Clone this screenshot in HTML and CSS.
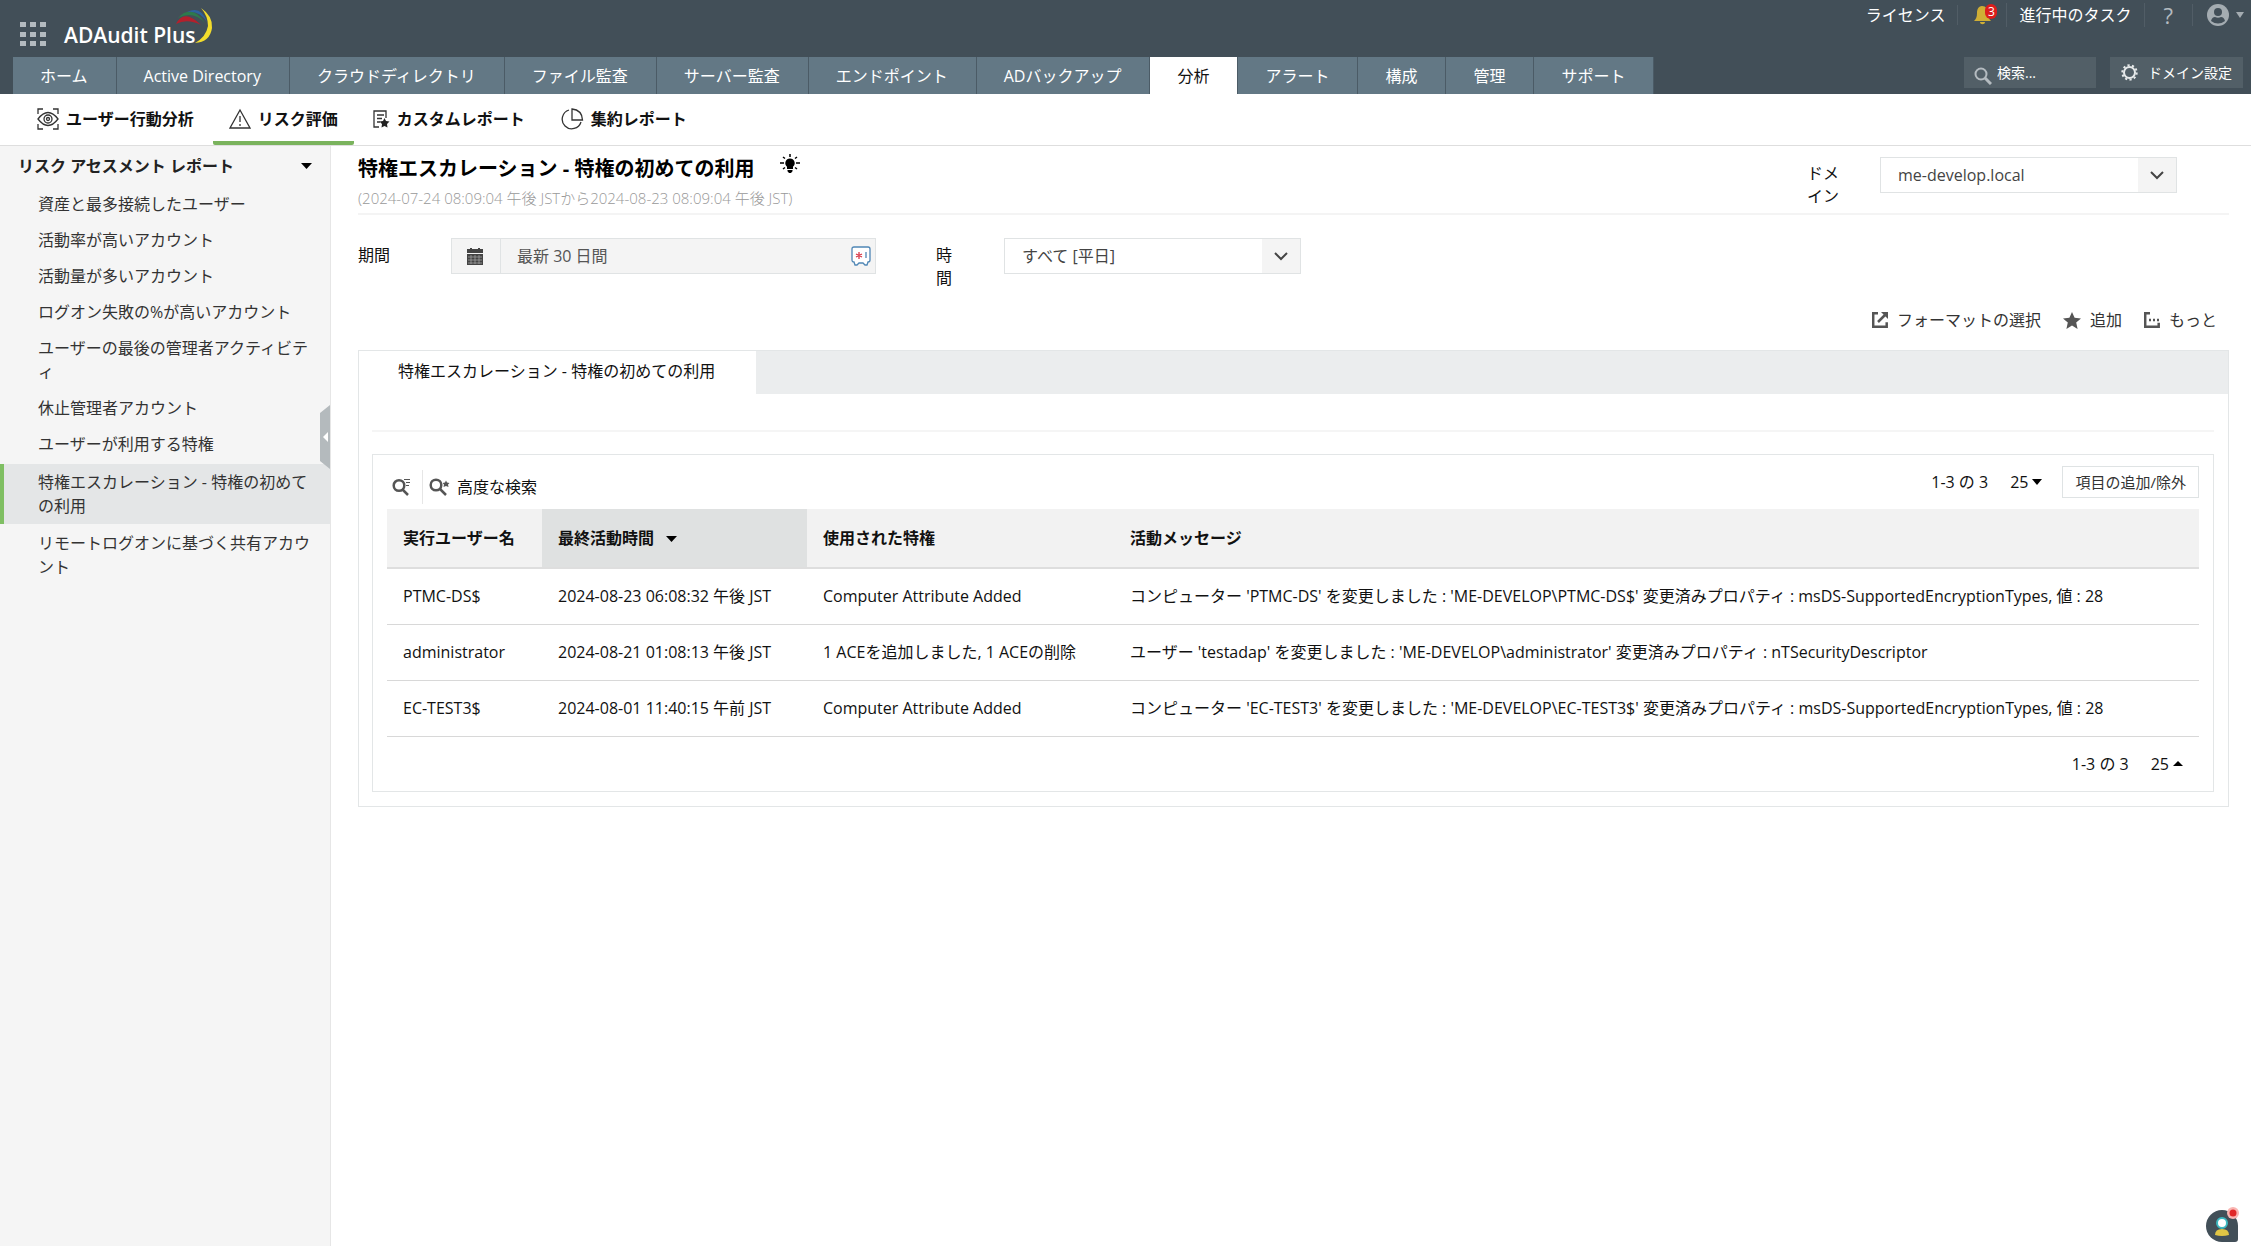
FILE: index.html
```html
<!DOCTYPE html>
<html lang="ja">
<head>
<meta charset="utf-8">
<title>ADAudit Plus</title>
<link rel="stylesheet" href="styles.css">
</head>
<body>
<header class="header">
  <div class="header-top">
    <div class="brand">
      <button class="icon-button" aria-label="アプリ">
        <svg width="26" height="25" viewBox="0 0 26 25" fill="#b4bbc0"><path d="M0 0h6v5H0zM10 0h6v5h-6zM20 0h6v5h-6zM0 10h6v5H0zM10 10h6v5h-6zM20 10h6v5h-6zM0 19h6v5H0zM10 19h6v5h-6zM20 19h6v5h-6z"/></svg>
      </button>
      <a class="logo" href="#">ADAudit Plus
        <svg class="logo-swoosh" width="37" height="36" viewBox="0 0 37 36"><path d="M0 16Q8 0 25 17Q11 10 0 16Z" fill="#b3202c"/><path d="M2 10Q16-5 29 15Q17 2 2 10Z" fill="#2d7a4c"/><path d="M11 4Q25-3 31 14Q23 2 11 4Z" fill="#2d62a0"/><path d="M25 0Q37 8 36 20Q34 34 19 35Q30 29 32 18Q32 8 25 0Z" fill="#f2dc2c"/></svg>
      </a>
    </div>
    <div class="user-bar">
      <a href="#">ライセンス</a>
      <button class="icon-button bell" aria-label="通知">
        <svg width="20" height="20" viewBox="0 0 20 20" fill="#cfae35"><path d="M9 1c-4 0-5 4-5 7 0 4-1 6-3 8h17c-2-2-3-4-3-8 0-4-2-7-6-7zM7 17h5c0 3-5 3-5 0z"/></svg>
        <span class="badge">3</span>
      </button>
      <a href="#">進行中のタスク</a>
      <a class="help" href="#" aria-label="ヘルプ">?</a>
      <button class="icon-button account" aria-label="アカウント">
        <svg width="22" height="22" viewBox="0 0 22 22"><circle cx="11" cy="11" r="11" fill="#a4acb1"/><circle cx="11" cy="8" r="4" fill="#424f58"/><path d="M4 17q1-4 4-4 3 1.500 6 0 3 0 4 4-7 5-14 0z" fill="#424f58"/></svg>
        <svg width="8" height="6" viewBox="0 0 8 6"><path d="M0 0h8L4 6z" fill="#a4acb1"/></svg>
      </button>
    </div>
  </div>
  <div class="header-nav">
    <nav class="tabs">
      <a href="#">ホーム</a><a href="#">Active Directory</a><a href="#">クラウドディレクトリ</a><a href="#">ファイル監査</a><a href="#">サーバー監査</a><a href="#">エンドポイント</a><a href="#">ADバックアップ</a><a class="current" href="#">分析</a><a href="#">アラート</a><a href="#">構成</a><a href="#">管理</a><a href="#">サポート</a>
    </nav>
    <div class="tools">
      <label class="search">
        <svg width="18" height="18" viewBox="0 0 18 18" fill="none" stroke="#b4bbc0" stroke-width="2"><circle cx="7" cy="7" r="5.500"/><path d="M11 11l6 6" stroke-width="3"/></svg>
        <input type="text" placeholder="検索..." aria-label="検索">
      </label>
      <button class="domain-settings">
        <svg width="17" height="17" viewBox="0 0 17 17" fill="none" stroke="#e6e9ea"><circle cx="8.500" cy="8.500" r="5.500" stroke-width="2"/><circle cx="8.500" cy="8.500" r="7.200" stroke-width="2" stroke-dasharray="2.200 2.324"/></svg>
        ドメイン設定
      </button>
    </div>
  </div>
</header>

<nav class="subnav">
  <a href="#"><svg width="22" height="22" viewBox="0 0 22 22" fill="none" stroke="#333" stroke-width="1.300"><path d="M1 6V1h5M16 1h5v5M21 16v5h-5M6 21H1v-5M1 11q10-13 20 0-10 13-20 0z"/><circle cx="11" cy="11" r="4"/><circle cx="11" cy="11" r="1.500"/></svg>ユーザー行動分析</a>
  <a class="current" href="#"><svg width="22" height="22" viewBox="0 0 22 22" fill="none" stroke="#333" stroke-width="1.300"><path d="M11 2L1 20h20zM11 8v6M11 16v2"/></svg>リスク評価</a>
  <a href="#"><svg width="17" height="18" viewBox="0 0 17 18" fill="none" stroke="#333" stroke-width="1.300"><path d="M6 17H1V1h12v7M4 5h7M4 8.500h5M4 12h3"/><path d="M11.500 8l1.500 3 3.500.5-2.500 2.500.5 3.500-3-1.500-3 1.500.5-3.500L6.500 11.500l3.500-.5z" fill="#222" stroke="none"/></svg>カスタムレポート</a>
  <a href="#"><svg width="24" height="22" viewBox="0 0 24 22" fill="none" stroke="#333" stroke-width="1.300"><path d="M9 2a9.600 9.600 0 1 0 12 12M12 1v11h10.500Q22 2 12 1z"/></svg>集約レポート</a>
</nav>

<div class="layout">
  <aside class="sidebar">
    <h2>リスク アセスメント レポート <svg width="11" height="6" viewBox="0 0 11 6"><path d="M0 0h11L5.500 6z"/></svg></h2>
    <ul>
      <li><a href="#">資産と最多接続したユーザー</a></li>
      <li><a href="#">活動率が高いアカウント</a></li>
      <li><a href="#">活動量が多いアカウント</a></li>
      <li><a href="#">ログオン失敗の%が高いアカウント</a></li>
      <li><a href="#">ユーザーの最後の管理者アクティビティ</a></li>
      <li><a href="#">休止管理者アカウント</a></li>
      <li><a href="#">ユーザーが利用する特権</a></li>
      <li><a class="current" href="#">特権エスカレーション - 特権の初めての利用</a></li>
      <li><a href="#">リモートログオンに基づく共有アカウント</a></li>
    </ul>
    <button class="collapse" aria-label="サイドバーを閉じる"><svg width="10" height="64" viewBox="0 0 10 64"><path d="M10 0v64L0 56V8z" fill="#b4babd"/><path d="M8 27v10l-5-5z" fill="#fff"/></svg></button>
  </aside>

  <main class="main">
    <div class="page-head">
      <div>
        <h1>特権エスカレーション - 特権の初めての利用
          <svg width="20" height="20" viewBox="0 0 20 20"><path d="M10 4.500a4.700 4.700 0 0 1 3 8.300V15H7v-2.200a4.700 4.700 0 0 1 3-8.300zM7.500 16h5v1.300L11 19H9l-1.500-1.700z"/><path d="M10 0v3M3 3l2 1.500M17 3l-2 1.500M0 9h4M16 9h4M3 15l2-1.500M17 15l-2-1.500" stroke="#000" stroke-width="1.500"/></svg>
        </h1>
        <p class="range">(2024-07-24 08:09:04 午後 JSTから2024-08-23 08:09:04 午後 JST)</p>
      </div>
      <div class="domain-field">
        <label for="domain">ドメイン</label>
        <span class="select"><select id="domain"><option>me-develop.local</option></select><svg width="14" height="9" viewBox="0 0 14 9" fill="none" stroke="#444" stroke-width="2"><path d="M1 1l6 6 6-6"/></svg></span>
      </div>
    </div>

    <div class="filters">
      <label class="period-label" for="period">期間</label>
      <div class="period">
        <button aria-label="カレンダー"><svg width="16" height="17" viewBox="0 0 16 17"><path d="M0 1h3V0h2v1h6V0h2v1h3v4H0zM0 6h16v11H0z" fill="#444"/><path d="M1 9h14M1 12h14M1 15h14M4 7v9M8 7v9M12 7v9" stroke="#aaa" stroke-width=".7"/></svg></button>
        <input id="period" type="text" value="最新 30 日間">
        <svg width="20" height="20" viewBox="0 0 20 20" fill="none"><path d="M3 1h14q2 0 2 2v11q0 2-2 2l-1 3h-2l-2-2H8l-2 2H4l-1-3q-2 0-2-2V3q0-2 2-2z" fill="#fff" stroke="#4f86b5" stroke-width="1.300"/><path d="M8 6v7M5 8l6 3M11 8l-6 3" stroke="#d8394a" stroke-width="1.300"/><path d="M15 6v6" stroke="#4f86b5" stroke-width="1.300"/></svg>
      </div>
      <label class="time-label" for="time">時間</label>
      <span class="select"><select id="time"><option>すべて [平日]</option></select><svg width="14" height="9" viewBox="0 0 14 9" fill="none" stroke="#444" stroke-width="2"><path d="M1 1l6 6 6-6"/></svg></span>
    </div>

    <div class="actions">
      <button><svg width="16" height="16" viewBox="0 0 16 16" fill="none" stroke="#555" stroke-width="2.500"><path d="M6 1.200H1.200v13.500h13.500v-4.500M6 10l7-7"/><path d="M9 0h7v7z" fill="#555" stroke="none"/></svg>フォーマットの選択</button>
      <button><svg width="18" height="17" viewBox="0 0 18 17" fill="#555"><path d="M9 0l2.600 5.800 6.400.6-4.800 4.200L14.600 17 9 13.600 3.400 17l1.400-6.400L0 6.400l6.400-.6z"/></svg>追加</button>
      <button><svg width="16" height="16" viewBox="0 0 16 16" fill="none" stroke="#555" stroke-width="2.500"><path d="M6 1.200H1.200v13.500h13.500v-4M5 8h2M9 8h2M13 8h2"/></svg>もっと</button>
    </div>

    <section class="panel">
      <div class="panel-tabs"><button>特権エスカレーション - 特権の初めての利用</button></div>
      <div class="panel-body">
        <hr>
        <div class="report">
          <div class="report-bar">
            <button class="quick" aria-label="検索"><svg width="18" height="18" viewBox="0 0 18 18" fill="none" stroke="#555" stroke-width="2.500"><circle cx="7" cy="7.500" r="5.300"/><path d="M10 11l6 6"/><path d="M12 1.500h6M14 4.500h4M14 7.500h3" stroke-width="1"/></svg></button>
            <button class="advanced"><svg width="21" height="18" viewBox="0 0 21 18" fill="none" stroke="#555" stroke-width="2.500"><circle cx="7" cy="7" r="5.300"/><path d="M11 11l6 6"/><path d="M17 2.500l1 2 2.500.5-1.500 1.500.5 2.500-2.500-1-2.500 1 .5-2.500L13.500 5l2.500-.5z" fill="#555" stroke="none"/></svg>高度な検索</button>
            <span class="count">1-3 の 3</span>
            <button class="size">25<svg width="10" height="6" viewBox="0 0 10 6"><path d="M0 0h10L5 6z"/></svg></button>
            <button class="columns">項目の追加/除外</button>
          </div>
          <table>
            <thead>
              <tr><th class="c-user">実行ユーザー名</th><th class="c-time sorted">最終活動時間<svg width="11" height="6" viewBox="0 0 11 6"><path d="M0 0h11L5.500 6z"/></svg></th><th class="c-priv">使用された特権</th><th>活動メッセージ</th></tr>
            </thead>
            <tbody>
              <tr><td>PTMC-DS$</td><td>2024-08-23 06:08:32 午後 JST</td><td>Computer Attribute Added</td><td>コンピューター 'PTMC-DS' を変更しました : 'ME-DEVELOP\PTMC-DS$' 変更済みプロパティ : msDS-SupportedEncryptionTypes, 値 : 28</td></tr>
              <tr><td>administrator</td><td>2024-08-21 01:08:13 午後 JST</td><td>1 ACEを追加しました, 1 ACEの削除</td><td>ユーザー 'testadap' を変更しました : 'ME-DEVELOP\administrator' 変更済みプロパティ : nTSecurityDescriptor</td></tr>
              <tr><td>EC-TEST3$</td><td>2024-08-01 11:40:15 午前 JST</td><td>Computer Attribute Added</td><td>コンピューター 'EC-TEST3' を変更しました : 'ME-DEVELOP\EC-TEST3$' 変更済みプロパティ : msDS-SupportedEncryptionTypes, 値 : 28</td></tr>
            </tbody>
          </table>
          <div class="report-foot">
            <span>1-3 の 3</span>
            <button class="size">25<svg width="10" height="5" viewBox="0 0 10 5"><path d="M0 5h10L5 0z"/></svg></button>
          </div>
        </div>
      </div>
    </section>
  </main>
</div>

<button class="chat" aria-label="サポートチャット">
  <svg width="38" height="38" viewBox="0 0 38 38"><path d="M17 4a16 16 0 1 0 0 32h13q3 0 3-3V20A16 16 0 0 0 17 4z" fill="#424f58"/><circle cx="17" cy="17" r="5" fill="#fff" stroke="#3cb8c0" stroke-width="2"/><path d="M10 29q0-6 7-6t7 6q-7 2-14 0z" fill="#e0c545"/><circle cx="28" cy="7" r="6" fill="#f9b5b2"/><circle cx="28" cy="7" r="3.500" fill="#e02828"/></svg>
</button>
</body>
</html>
```
FILE: styles.css
```css
* { box-sizing: border-box; }

body {
  margin: 0;
  min-height: 100vh;
  display: flex;
  flex-direction: column;
  background: #fff;
  color: #111;
  font: 16px/24px "Open Sans", "Noto Sans CJK JP", sans-serif;
}

a { color: inherit; text-decoration: none; }
button, input, select { font: inherit; color: inherit; }
button { padding: 0; border: 0; background: none; cursor: pointer; }
svg { flex: none; display: block; }
h1, h2, p, ul { margin: 0; padding: 0; }
ul { list-style: none; }

/* Header */
.header { background: #424f58; color: #fff; }
.header-top { display: flex; justify-content: space-between; height: 57px; }
.brand { display: flex; align-items: center; gap: 18px; padding: 12px 0 0 20px; }
.icon-button { display: flex; align-items: center; }
.logo { position: relative; font: 600 21px/26px "Open Sans", sans-serif; }
.logo-swoosh { position: absolute; left: 112px; top: -14px; }
.user-bar { display: flex; align-items: center; height: 28px; margin-top: 1px; padding-right: 7px; }
.user-bar > * { padding: 0 12px; border-left: 1px solid #515d66; }
.user-bar > :first-child { border-left: 0; }
.user-bar .bell { position: relative; padding: 0 13px 0 15px; }
.badge {
  position: absolute; left: 27px; top: -1px; width: 12px; height: 15px;
  border-radius: 8px; background: #dd1c1c; font-size: 12px; line-height: 15px;
}
.user-bar .help { padding: 0 19px; color: #b4bbc0; font-size: 22px; }
.user-bar .account { gap: 7px; padding: 0 0 0 14px; }

.header-nav { display: flex; justify-content: space-between; align-items: flex-start; padding: 0 8px 0 13px; }
.tabs { display: flex; }
.tabs a { height: 37px; padding: 0 28px 0 27px; border-right: 1px solid #4b5b66; background: #637885; line-height: 38px; white-space: nowrap; }
.tabs .current { background: #fff; color: #111; }
.tools { display: flex; gap: 14px; font-size: 14px; }
.search { display: flex; align-items: center; gap: 5px; width: 132px; height: 31px; padding-left: 10px; background: #525f67; }
.search svg { margin-top: 6px; }
.search input { width: 90px; padding: 0; border: 0; outline: 0; background: none; }
.search input::placeholder { color: #fff; opacity: 1; }
.domain-settings { display: flex; align-items: center; gap: 10px; height: 31px; padding: 0 11px; background: #525f67; white-space: nowrap; }

/* Second level navigation */
.subnav { display: flex; height: 52px; gap: 3px; padding: 0 21px; border-bottom: 1px solid #dedede; font-weight: 700; }
.subnav a { display: flex; align-items: center; gap: 7px; padding: 2px 16px 0; border-bottom: 4px solid transparent; }
.subnav .current { border-color: #7ab35d; border-radius: 2px; }

.layout { display: flex; flex: 1; }

/* Sidebar */
.sidebar { position: relative; flex: none; width: 331px; border-right: 1px solid #e6e6e6; background: #f5f5f5; color: #333; }
.sidebar h2 { display: flex; align-items: center; justify-content: space-between; padding: 8px 18px; font-size: 16px; line-height: 24px; color: #222; }
.sidebar li a { display: block; padding: 6px 16px 6px 38px; }
.sidebar li .current { margin: 2px 0 1px; padding-left: 34px; border-left: 4px solid #7fbf63; background: #e4e6e7; }
.collapse { position: absolute; right: 0; top: 259px; }

/* Main column */
.main { flex: 1; min-width: 0; padding: 0 22px 24px 27px; }
.page-head { display: flex; justify-content: space-between; height: 69px; padding-top: 8px; border-bottom: 2px solid #f4f4f4; }
h1 { display: flex; gap: 26px; font-size: 20px; line-height: 30px; color: #000; }
.range { margin-top: 2px; color: #999; font-size: 15px; font-weight: 300; }
.domain-field { display: flex; gap: 41px; margin: 3px 52px 0 0; }
.domain-field label { width: 32px; margin-top: 5px; line-height: 23px; word-break: break-all; }
.select { position: relative; flex: none; width: 297px; height: 36px; border: 1px solid #e0e3e4; background: linear-gradient(to left, #f4f4f4 38px, #fff 38px); }
.select select { appearance: none; width: 100%; height: 34px; padding: 0 44px 0 17px; border: 0; background: none; color: #444; }
.select svg { position: absolute; right: 12px; top: 13px; pointer-events: none; }

.filters { display: flex; height: 70px; margin-top: 23px; line-height: 23px; }
.period-label { width: 93px; margin-top: 6px; }
.period { display: flex; align-items: center; width: 425px; height: 36px; padding-right: 4px; border: 1px solid #e0e3e4; background: #f4f4f4; }
.period button { width: 49px; height: 34px; padding-left: 15px; border-right: 1px solid #e0e3e4; }
.period input { flex: 1; min-width: 0; padding: 0 16px; border: 0; background: none; color: #555; }
.time-label { width: 16px; margin: 6px 52px 0 60px; word-break: break-all; }

.actions { display: flex; justify-content: flex-end; gap: 22px; height: 42px; padding: 0 12px; color: #333; }
.actions button { display: flex; align-items: center; gap: 9px; height: 24px; }

/* Report panel */
.panel { border: 1px solid #e3e6e7; }
.panel-tabs { height: 43px; background: #ebedee; }
.panel-tabs button { height: 100%; padding: 0 41px 3px 39px; background: #fff; }
.panel-body { padding: 36px 14px 14px 13px; }
hr { height: 2px; margin: 0 0 22px; border: 0; background: #f5f5f5; }
.report { border: 1px solid #e3e6e7; padding: 0 14px; }
.report-bar { display: flex; align-items: center; height: 54px; }
.quick { width: 36px; height: 34px; padding-left: 5px; border-right: 1px solid #e6e6e6; margin-top: 10px; }
.advanced { display: flex; align-items: center; gap: 7px; margin: 10px auto 0 6px; }
.size { display: flex; align-items: center; gap: 4px; margin-left: 22px; }
.columns { height: 32px; margin-left: 20px; padding: 0 12px; border: 1px solid #dfe3e4; background: #fff; font-size: 15px; color: #333; }

table { width: 100%; table-layout: fixed; border-collapse: collapse; }
th { height: 59px; padding: 0 16px; border-bottom: 2px solid #dedede; background: #f2f2f2; text-align: left; }
td { height: 56px; padding: 0 16px; border-bottom: 1px solid #d8d8d8; white-space: nowrap; }
th svg { display: inline-block; margin-left: 12px; vertical-align: 2px; }
.c-user { width: 155px; }
.c-time { width: 265px; }
.c-priv { width: 307px; }
.sorted { background: #dfe1e1; }
.report-foot { display: flex; justify-content: flex-end; height: 54px; align-items: center; padding-right: 16px; }

.chat { position: fixed; right: 8px; bottom: 2px; }
```
